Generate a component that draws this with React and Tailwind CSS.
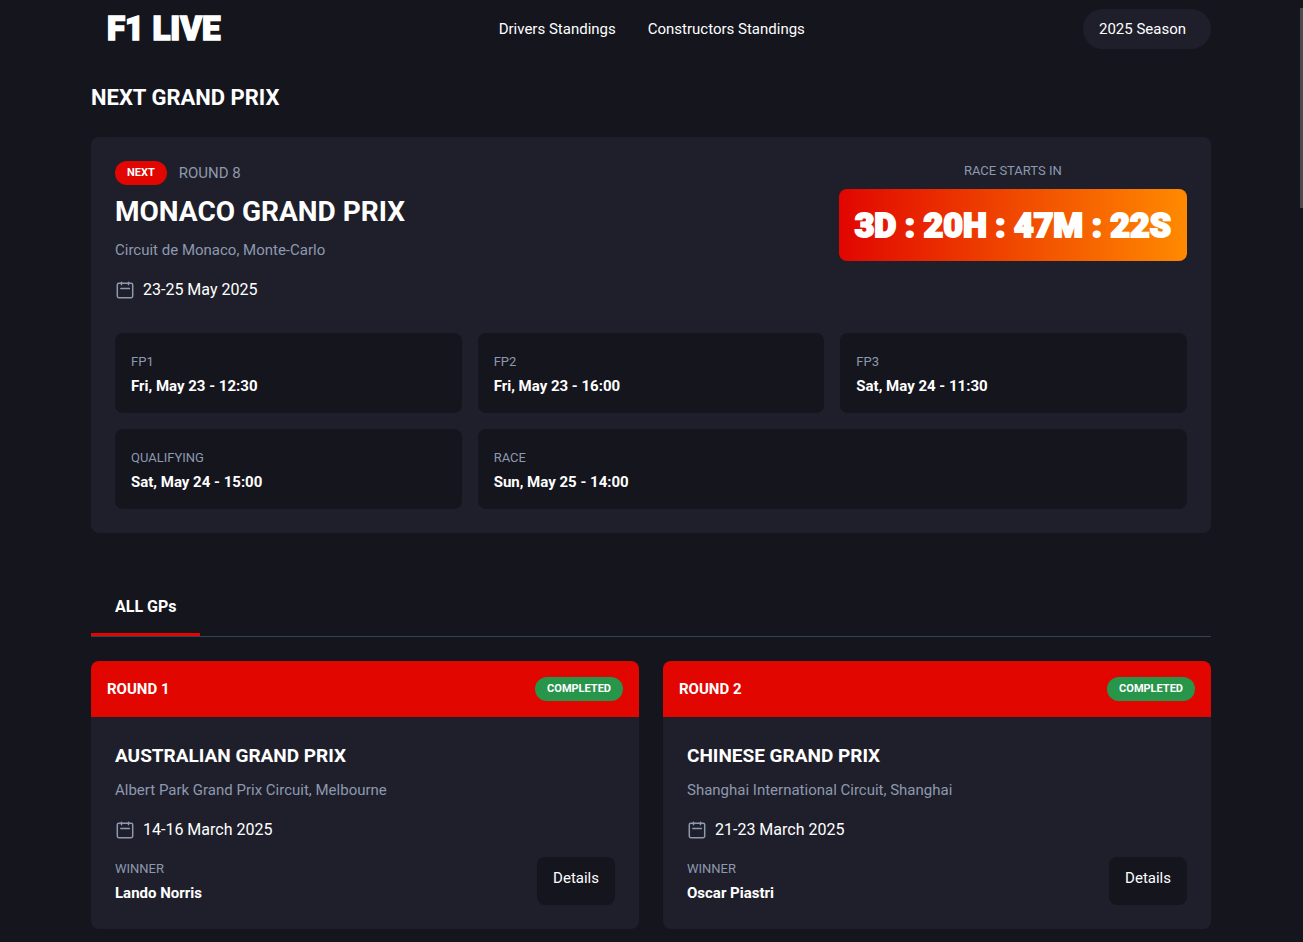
import React from "react";

const sessions = [
  { name: "FP1", time: "Fri, May 23 - 12:30" },
  { name: "FP2", time: "Fri, May 23 - 16:00" },
  { name: "FP3", time: "Sat, May 24 - 11:30" },
  { name: "QUALIFYING", time: "Sat, May 24 - 15:00" },
  { name: "RACE", time: "Sun, May 25 - 14:00", wide: true },
];

const races = [
  {
    round: 1,
    name: "AUSTRALIAN GRAND PRIX",
    circuit: "Albert Park Grand Prix Circuit, Melbourne",
    dates: "14-16 March 2025",
    winner: "Lando Norris",
  },
  {
    round: 2,
    name: "CHINESE GRAND PRIX",
    circuit: "Shanghai International Circuit, Shanghai",
    dates: "21-23 March 2025",
    winner: "Oscar Piastri",
  },
];

function CalendarIcon() {
  return (
    <svg
      className="size-5 shrink-0 text-[#8d99ae]"
      viewBox="0 0 20 20"
      fill="none"
      stroke="currentColor"
      strokeWidth="1.5"
      strokeLinecap="round"
      strokeLinejoin="round"
      aria-hidden="true"
    >
      <rect x="2.3" y="3.3" width="15.4" height="14.4" rx="1.4" />
      <path d="M6.5 2.3v2.4M13.5 2.3v2.4M5.8 8.5h8.6" />
    </svg>
  );
}

function DateLine({ children }) {
  return (
    <div className="mt-4 flex items-center gap-2">
      <CalendarIcon />
      <span className="text-base leading-6">{children}</span>
    </div>
  );
}

function Session({ name, time, wide }) {
  return (
    <div className={`h-20 rounded-lg bg-[#15151e] px-4 pt-[17px] ${wide ? "col-span-2" : ""}`}>
      <p className="text-[13px] leading-6 text-[#8d99ae]">{name}</p>
      <p className="text-[15px] leading-6 font-bold">{time}</p>
    </div>
  );
}

function RaceCard({ round, name, circuit, dates, winner }) {
  return (
    <article className="overflow-hidden rounded-lg bg-[#1f1f2b]">
      <header className="flex h-14 items-center justify-between bg-[#e10600] px-4">
        <h3 className="text-[15px] leading-6 font-bold">ROUND {round}</h3>
        <span className="rounded-full bg-[#27964a] px-3 text-[11px] leading-6 font-bold">COMPLETED</span>
      </header>
      <div className="p-6">
        <h4 className="text-[19px] leading-[30px] font-bold">{name}</h4>
        <p className="mt-[7px] text-[15px] leading-6 text-[#8d99ae]">{circuit}</p>
        <DateLine>{dates}</DateLine>
        <div className="mt-[15px] flex items-start justify-between">
          <div>
            <p className="text-[13px] leading-6 text-[#8d99ae]">WINNER</p>
            <p className="text-[15px] leading-6 font-bold">{winner}</p>
          </div>
          <button type="button" className="h-12 rounded-lg bg-[#15151e] px-4 pb-1.5 text-[15px]">
            Details
          </button>
        </div>
      </div>
    </article>
  );
}

export default function App() {
  return (
    <div className="relative min-h-screen bg-[#15151e] pr-px font-['Roboto','Liberation_Sans',sans-serif] text-white">
      <div className="mx-auto max-w-[1120px] pb-3">
        <header className="flex h-[58px] items-center justify-between pl-4">
          <a
            href="#home"
            className="text-[33px] leading-9 font-black [-webkit-text-stroke:1.5px_white]"
          >
            F1 LIVE
          </a>
          <nav className="flex gap-8 text-[15px] leading-6">
            <a href="#drivers">Drivers Standings</a>
            <a href="#constructors">Constructors Standings</a>
          </nav>
          <select
            aria-label="Season"
            className="h-10 w-32 appearance-none rounded-full bg-[#1f1f2b] px-4 text-[15px]"
          >
            <option>2025 Season</option>
          </select>
        </header>

        <main>
          <h1 className="mt-6 text-[22px] leading-8 font-bold">NEXT GRAND PRIX</h1>

          <section className="mt-[23px] rounded-lg bg-[#1f1f2b] p-6">
            <div className="flex items-start justify-between">
              <div>
                <div className="flex items-center gap-3">
                  <span className="rounded-full bg-[#e10600] px-3 text-[11px] leading-6 font-bold">NEXT</span>
                  <span className="text-[15px] leading-6 text-[#8d99ae]">ROUND 8</span>
                </div>
                <h2 className="mt-2 text-[28px] leading-[38px] font-bold">MONACO GRAND PRIX</h2>
                <p className="mt-[7px] text-[15px] leading-6 text-[#8d99ae]">Circuit de Monaco, Monte-Carlo</p>
                <DateLine>23-25 May 2025</DateLine>
              </div>
              <div className="text-center">
                <p className="text-[13px] leading-5 text-[#8d99ae]">RACE STARTS IN</p>
                <p className="mt-2 rounded-lg bg-linear-to-r/srgb from-[#e10600] to-[#ff8a00] px-4 text-[34px] leading-[72px] font-black [-webkit-text-stroke:2px_white]">
                  3D : 20H : 47M : 22S
                </p>
              </div>
            </div>
            <div className="mt-[31px] grid grid-cols-3 gap-4">
              {sessions.map((s) => (
                <Session key={s.name} {...s} />
              ))}
            </div>
          </section>

          <div className="mt-12 flex border-b border-[#364250]">
            <button type="button" className="h-[55px] border-b-3 border-[#e10600] px-6 text-base font-bold">
              ALL GPs
            </button>
          </div>

          <section className="mt-6 grid grid-cols-2 gap-6">
            {races.map((r) => (
              <RaceCard key={r.round} {...r} />
            ))}
          </section>
        </main>
      </div>
      <div className="absolute top-2 right-0 h-[200px] w-[3px] bg-[#4a4a4f]" />
    </div>
  );
}
